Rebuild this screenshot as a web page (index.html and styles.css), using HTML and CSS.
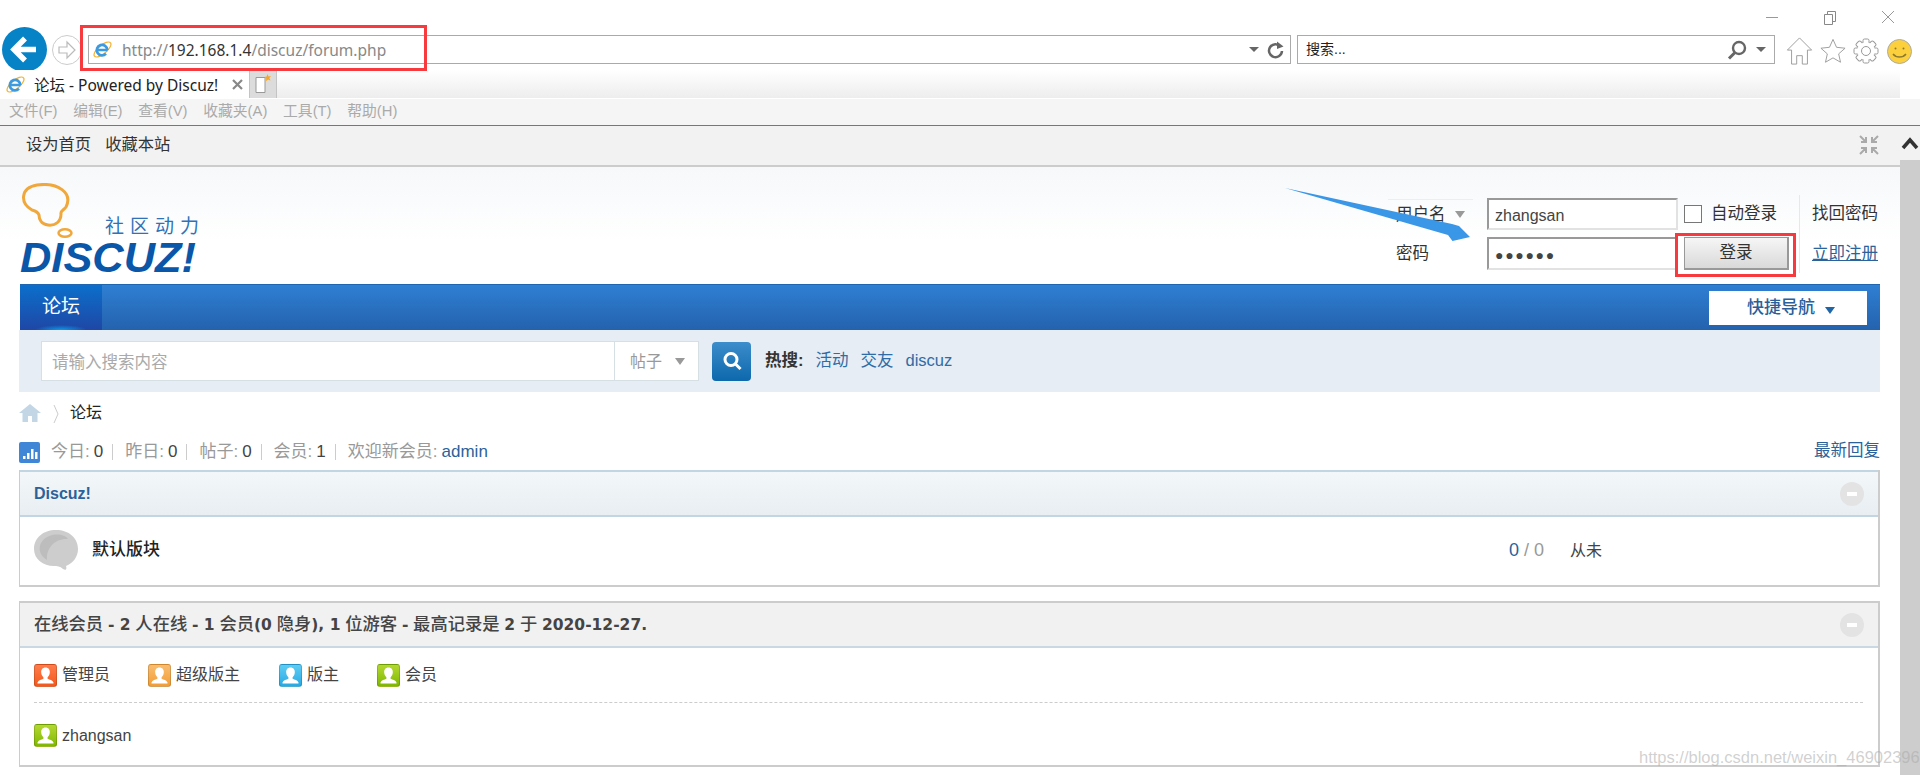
FILE: index.html
```html
<!DOCTYPE html>
<html lang="zh-CN">
<head>
<meta charset="utf-8">
<title>论坛 - Powered by Discuz!</title>
<link rel="stylesheet" href="styles.css">
</head>
<body>
<svg class="defs" width="0" height="0" aria-hidden="true">
  <symbol id="ie" viewBox="0 0 20 20">
    <ellipse cx="10" cy="10" rx="11" ry="4.500" transform="rotate(-40 10 10)" fill="none" stroke="#f2b233" stroke-width="1.300"/>
    <path d="M5.500 10.500h9.800M15 10.500a5.500 5.500 0 1 0-1.400 3.800" fill="none" stroke="#3b9ae0" stroke-width="2.800"/>
  </symbol>
  <symbol id="person" viewBox="0 0 23 23">
    <path d="M11.500 3.500c-3 0-4.500 2.200-4.300 5 .1 2 1 3.700 2.200 4.700v1.500c-2 1-5 1.300-5.900 3.800v1h16v-1c-.9-2.500-3.900-2.800-5.900-3.800v-1.500c1.200-1 2.100-2.700 2.200-4.700.2-2.800-1.300-5-4.300-5z" fill="#fff"/>
  </symbol>
  <symbol id="minus" viewBox="0 0 24 24">
    <circle cx="12" cy="12" r="12" fill="#e3e3e3"/><rect x="7" y="10" width="10" height="4" fill="#fff"/>
  </symbol>
</svg>

<div class="topstrip">
  <span class="win-btn"><svg width="14" height="14" viewBox="0 0 14 14"><path d="M1 7.500h12" stroke="#999" fill="none"/></svg></span>
  <span class="win-btn"><svg width="14" height="16" viewBox="0 0 14 16"><path d="M1.500 4.500h8v10h-8zM4.500 4.500v-3h8v10h-3" stroke="#888" fill="none"/></svg></span>
  <span class="win-btn"><svg width="14" height="14" viewBox="0 0 14 14"><path d="M1 1l12 12M13 1L1 13" stroke="#999" fill="none"/></svg></span>
</div>

<div class="navrow">
  <span class="back"><svg width="45" height="45" viewBox="0 0 45 45"><circle cx="22.500" cy="22.500" r="22.500" fill="#0683c6"/><path d="M34 22.500H13M23 11.500l-11 11 11 11" fill="none" stroke="#fff" stroke-width="5.500"/></svg></span>
  <span class="forward"><svg width="30" height="30" viewBox="0 0 30 30"><circle cx="15" cy="15" r="14.500" fill="#fff" stroke="#ccc"/><path d="M7 12h8V7l8 8-8 8v-5H7z" fill="none" stroke="#bbb" stroke-width="1.200"/></svg></span>
  <div class="addr">
    <svg class="ie-small" width="19" height="19"><use href="#ie"/></svg>
    <span class="url">http://<b>192.168.1.4</b>/discuz/forum.php</span>
    <span class="caret-sm"></span>
    <svg class="reload" width="18" height="20" viewBox="0 0 18 20"><path d="M13.500 6.500A6.500 6.500 0 1 0 15 11" fill="none" stroke="#666" stroke-width="2.500"/><path d="M10 1.500l6.500 5-6.500 2.500z" fill="#666"/></svg>
  </div>
  <div class="searchbox">
    <span class="search-label">搜索...</span>
    <svg width="20" height="20" viewBox="0 0 20 20"><circle cx="12" cy="8" r="6" fill="none" stroke="#666" stroke-width="2.400"/><path d="M8 12.500L2 18.500" stroke="#666" stroke-width="3"/></svg>
    <span class="caret-sm"></span>
  </div>
  <div class="tools">
    <svg width="27" height="28" viewBox="0 0 28 30"><path d="M14 1L1 14h4.500v15H11v-9h6v9h5.500V14H27z" fill="#fff" stroke="#999"/></svg>
    <svg width="26" height="26" viewBox="0 0 28 28"><path d="M14 1.500l3.800 8.500 9.200 1-6.900 6.100 2 9-8.100-4.700-8.100 4.700 2-9L1 11l9.200-1z" fill="#fff" stroke="#999"/></svg>
    <svg class="gear" width="26" height="26" viewBox="0 0 26 26"><g fill="#fff" stroke="#999"><rect x="10" y="1" width="6" height="24" rx="1.500"/><rect x="10" y="1" width="6" height="24" rx="1.500" transform="rotate(45 13 13)"/><rect x="10" y="1" width="6" height="24" rx="1.500" transform="rotate(90 13 13)"/><rect x="10" y="1" width="6" height="24" rx="1.500" transform="rotate(135 13 13)"/></g><circle cx="13" cy="13" r="8.800" fill="#fff"/><circle cx="13" cy="13" r="4.500" fill="#fff" stroke="#999"/></svg>
    <svg width="25" height="25" viewBox="0 0 25 25"><ellipse cx="12.500" cy="12.500" rx="12" ry="12" fill="#fcd03c" stroke="#aaa"/><circle cx="8.500" cy="9.500" r="1" fill="#8a7a30"/><circle cx="16.500" cy="9.500" r="1" fill="#8a7a30"/><path d="M6 15c3 4 10 4 13 0" fill="none" stroke="#8a7a30" stroke-width="1.500"/></svg>
  </div>
</div>

<div class="tabrow">
  <div class="tab">
    <svg width="19" height="19"><use href="#ie"/></svg>
    <span class="tab-title">论坛 - Powered by Discuz!</span>
    <svg class="tab-close" width="11" height="11" viewBox="0 0 11 11"><path d="M1 1l9 9M10 1l-9 9" stroke="#888" stroke-width="2.200"/></svg>
  </div>
  <div class="newtab"><svg width="18" height="20" viewBox="0 0 18 20"><path d="M2 3.500h9v15H2z" fill="#fff" stroke="#999"/><path d="M13.500 0l1 2.500 2.500-.4-1.700 2 1.200 2.400-2.500-1-2 1.700.3-2.700-2-1.600 2.400-.5z" fill="#f5a623"/></svg></div>
</div>

<div class="menubar">
  <span>文件(F)</span><span>编辑(E)</span><span>查看(V)</span><span>收藏夹(A)</span><span>工具(T)</span><span>帮助(H)</span>
</div>

<div class="viewport">
  <main class="page">
    <div class="topbar">
      <a class="tb-link">设为首页</a><a class="tb-link">收藏本站</a>
      <svg class="shrink" width="20" height="20" viewBox="0 0 20 20"><path d="M1 1l6 6M7 2v5H2M19 1l-6 6M13 2v5h5M1 19l6-6M7 18v-5H2M19 19l-6-6M13 18v-5h5" fill="none" stroke="#aaa" stroke-width="2"/></svg>
    </div>

    <div class="content">
      <header class="hdr">
        <svg class="logo" width="182" height="100" viewBox="0 0 182 100">
          <path d="M12 27C0 20 0 5 17 2c21-3 36 8 29 22-2 3-6 4-5 7 0 7-5 12-13 11-7-1-9-6-9-10-1-3-3-4-7-5z" fill="none" stroke="#f0a83c" stroke-width="3"/>
          <ellipse cx="45" cy="50" rx="6.500" ry="3.700" fill="none" stroke="#f0a83c" stroke-width="2.500"/>
          <text class="logo-cn" x="85" y="50" textLength="94">社区动力</text>
          <text class="logo-en" x="0" y="89" textLength="176" lengthAdjust="spacingAndGlyphs">DISCUZ!</text>
        </svg>
        <form class="login">
          <span class="lg-label lg-user">用户名<i class="tri tri-grey"></i></span>
          <span class="inp">zhangsan</span>
          <label class="auto"><i class="chk"></i>自动登录</label>
          <a class="lg-link">找回密码</a>
          <span class="lg-label">密码</span>
          <span class="inp inp-pw">●●●●●●</span>
          <span class="btn">登录</span>
          <a class="lg-link lg-reg">立即注册</a>
        </form>
      </header>

      <nav class="nav">
        <a class="nav-cur">论坛</a>
        <a class="quick">快捷导航<i class="tri tri-blue"></i></a>
      </nav>

      <div class="sband">
        <div class="sinput">请输入搜索内容</div>
        <div class="ssel">帖子<i class="tri tri-grey"></i></div>
        <span class="sbtn"><svg width="24" height="24" viewBox="0 0 24 24"><circle cx="11" cy="10.500" r="6" fill="none" stroke="#fff" stroke-width="3"/><path d="M15.500 15l5 5" stroke="#fff" stroke-width="3"/></svg></span>
        <strong class="hot">热搜:</strong>
        <a class="hotlink">活动</a><a class="hotlink">交友</a><a class="hotlink">discuz</a>
      </div>

      <div class="crumb">
        <svg width="22" height="18" viewBox="0 0 22 18"><path d="M11 0L0 9h3.500v9h5.500v-6h4v6h5.500V9H22z" fill="#c2d6e6"/></svg>
        <svg class="chev" width="6" height="20" viewBox="0 0 6 20"><path d="M1 1l4 9-4 9" fill="none" stroke="#ccc"/></svg>
        <span>论坛</span>
      </div>

      <div class="stats">
        <span class="chart"><svg width="21" height="21" viewBox="0 0 21 21"><path d="M4 14h2.500v3H4zM8 11h2.500v6H8zM12 7h2.500v10H12zM16 10h2.500v7H16z" fill="#fff"/></svg></span>
        <span class="st">今日:<em>0</em></span><i class="sep"></i>
        <span class="st">昨日:<em>0</em></span><i class="sep"></i>
        <span class="st">帖子:<em>0</em></span><i class="sep"></i>
        <span class="st">会员:<em>1</em></span><i class="sep"></i>
        <span class="st">欢迎新会员:<a class="admin">admin</a></span>
        <a class="latest">最新回复</a>
      </div>

      <section class="box">
        <div class="box-h box-h-blue">
          <a class="box-title">Discuz!</a>
          <svg width="24" height="24"><use href="#minus"/></svg>
        </div>
        <div class="forum">
          <svg class="bubble" width="44" height="40" viewBox="0 0 44 40"><path d="M22 0C9 0 0 8 0 19c0 10 9 17 20 17 3 0 6 0 9 3 3 2 4 0 3-3 7-3 12-9 12-17C44 8 35 0 22 0z" fill="#cdcdcd"/><path d="M13 30C12 17 22 8 34 9 30 3 14 2 7 13c-3 6-1 13 6 17z" fill="#bdbdbd"/></svg>
          <a class="forum-name">默认版块</a>
          <span class="counts"><b>0</b> / 0</span>
          <span class="never">从未</span>
        </div>
      </section>

      <section class="box box-2">
        <div class="box-h box-h-grey">
          <h2 class="online">在线会员 <b>- 2</b> 人在线 <b>- 1</b> 会员<b>(0</b> 隐身<b>), 1</b> 位游客 <b>-</b> 最高记录是 <b>2</b> 于 <b>2020-12-27.</b></h2>
          <svg width="24" height="24"><use href="#minus"/></svg>
        </div>
        <div class="legend">
          <span class="leg"><span class="badge b-admin"><svg width="23" height="23"><use href="#person"/></svg></span>管理员</span>
          <span class="leg"><span class="badge b-super"><svg width="23" height="23"><use href="#person"/></svg></span>超级版主</span>
          <span class="leg"><span class="badge b-mod"><svg width="23" height="23"><use href="#person"/></svg></span>版主</span>
          <span class="leg"><span class="badge b-member"><svg width="23" height="23"><use href="#person"/></svg></span>会员</span>
        </div>
        <div class="users">
          <span class="leg"><span class="badge b-member"><svg width="23" height="23"><use href="#person"/></svg></span>zhangsan</span>
        </div>
      </section>
    </div>
  </main>
  <aside class="scroll">
    <div class="scroll-top"><svg width="18" height="14" viewBox="0 0 18 14"><path d="M2 11l7-8 7 8" fill="none" stroke="#333" stroke-width="3.500"/></svg></div>
    <div class="scroll-thumb"></div>
  </aside>
</div>

<span class="redbox redbox-url"></span>
<span class="redbox redbox-btn"></span>
<svg class="arrow" width="190" height="56" viewBox="0 0 190 56"><path d="M0 0L167 36 174 38 185 49 167.500 53 163 47z" fill="#3a96e6"/></svg>
<span class="watermark">https://blog.csdn.net/weixin_46902396</span>
</body>
</html>
```
FILE: styles.css
```css
* { box-sizing: border-box; }
html, body { margin: 0; height: 775px; overflow: hidden; }
body {
  position: relative;
  background: #fff;
  color: #333;
  font: 16px/1.2 "Liberation Sans", "Noto Sans CJK SC", sans-serif;
}
a { color: inherit; text-decoration: none; }
i, em { font-style: normal; }
.defs { position: absolute; }
svg { display: block; flex: none; }

/* browser chrome */
.topstrip { height: 35px; display: flex; justify-content: flex-end; padding: 10px 25px 0 0; gap: 44px; }
.win-btn { width: 14px; height: 16px; }
.navrow { height: 29px; display: flex; align-items: center; padding-left: 2px; }
.back { width: 45px; height: 45px; flex: none; }
.forward { width: 30px; height: 30px; margin-left: 5px; flex: none; }
.addr {
  width: 1203px; height: 29px; margin-left: 6px; flex: none;
  display: flex; align-items: center;
  border: 1px solid #aaa; background: #fff;
  padding: 0 5px 0 4px;
}
.url { font: 15.500px "Noto Sans", sans-serif; color: #888; margin-left: 10px; padding-top: 1px; flex: 1; }
.url b { font-weight: 400; color: #333; }
.caret-sm { width: 0; height: 0; border: 5px solid transparent; border-top: 5px solid #666; border-bottom: 0; }
.reload { margin-left: 8px; }
.searchbox {
  width: 478px; height: 29px; margin-left: 6px; flex: none;
  display: flex; align-items: center; gap: 9px;
  border: 1px solid #aaa; padding: 0 8px;
}
.search-label { flex: 1; font-size: 14px; color: #222; }
.tools { display: flex; align-items: center; gap: 7px; margin-left: 11px; margin-top: 3px; }
.gear { margin-right: 1px; }

.tabrow {
  height: 28px; margin-top: 6px;
  display: flex; align-items: stretch;
  background: linear-gradient(#fff, #ededed);
  width: 1900px;
}
.tab { width: 249px; display: flex; align-items: center; background: #fff; padding-left: 6px; }
.tab-title { font: 15.500px "Noto Sans", "Noto Sans CJK SC", sans-serif; color: #222; margin-left: 9px; flex: 1; white-space: nowrap; }
.tab-close { margin-right: 6px; }
.newtab { width: 28px; background: #dcdcdc; border: 1px solid #c4c4c4; border-width: 0 1px; display: flex; align-items: center; justify-content: center; }

.menubar {
  height: 27px; margin-top: 1px; background: #f5f5f5;
  border-bottom: 1px solid #777;
  display: flex; align-items: center; padding-left: 9px;
  font-size: 14.800px; color: #aaa;
  gap: 15.700px;
}
.menubar span { white-space: nowrap; }

.viewport { display: flex; height: 649px; }
.page { width: 1900px; flex: none; }
.scroll { width: 20px; flex: none; display: flex; flex-direction: column; background: #f2f2f2; }
.scroll-top { height: 34px; padding: 11px 0 0 1px; }
.scroll-thumb { flex: 1; background: #cdcdcd; }

.topbar {
  height: 41px; background: #f2f2f2; border-bottom: 2px solid #ccc;
  display: flex; align-items: center; padding: 0 21px 2px 26px; gap: 14px;
  color: #333; font-size: 16.300px;
}
.shrink { margin-left: auto; }
.content { padding: 0 20px 0 19px; background: linear-gradient(#f6f8fa, #fff 75px) no-repeat; }

/* header */
.hdr { height: 117px; display: flex; justify-content: space-between; align-items: flex-start; }
.logo { margin: 16px 0 0 1px; }
.logo-cn { font: 19px "Noto Sans CJK SC", sans-serif; fill: #2f72b8; }
.logo-en { font: italic bold 42px "Liberation Sans", sans-serif; fill: #0a56a8; }
.login {
  margin-top: 31px;
  display: grid;
  grid-template-columns: 99px 197px 115px 81px;
  grid-template-rows: 32px 33px;
  row-gap: 7px;
  align-items: center;
  font-size: 16.500px;
}
.lg-label { padding-left: 8px; }
.lg-user { border-top: 1px solid #eee; display: flex; align-items: center; gap: 9px; height: 30px; width: 85px; }
.inp {
  height: 100%; display: flex; align-items: center;
  margin-right: 6px;
  padding: 3px 0 0 6px; color: #444;
  font-size: 16px;
  background: #fff;
  border: 2px solid; border-color: #999 #e2e2e2 #e2e2e2 #999;
}
.inp-pw { font-size: 14px; letter-spacing: 1.700px; }
.auto { display: flex; align-items: center; gap: 9px; white-space: nowrap; }
.chk { width: 18px; height: 18px; border: 1px solid #777; background: #fff; flex: none; }
.btn {
  margin-right: 10px; height: 33px;
  display: flex; align-items: center; justify-content: center;
  background: linear-gradient(#f6f6f6, #d9d9d9);
  border: 1px solid #999; border-width: 1px 2px 2px 1px; color: #333;
}
.lg-link { white-space: nowrap; border-left: 1px solid #e8e8e8; height: 39px; display: flex; align-items: center; padding-left: 12px; }
.lg-reg { color: #2b6299; text-decoration: underline; }

.tri { display: inline-block; width: 0; height: 0; border: 5.500px solid transparent; border-bottom: 0; border-top: 7px solid #999; }
.tri-blue { border-top-color: #1f66a8; margin: 4px 0 0 10px; }

/* nav */
.nav {
  height: 46px; margin-left: 1px; padding-right: 13px;
  display: flex; justify-content: space-between; align-items: center;
  background: linear-gradient(#2f7fd3, #2462ad);
  border-top: 1px solid #1e66b0;
}
.nav-cur {
  width: 82px; height: 100%;
  display: flex; align-items: center; justify-content: center;
  color: #fff; font-size: 19px;
  background: radial-gradient(ellipse 26px 5px at 50% 100%, #0a9be8, transparent), linear-gradient(#0b6fcb, #1f47a6);
}
.quick {
  width: 158px; height: 34px; background: #fff; color: #2b5f9a;
  font-size: 17px; font-weight: 500; display: flex; align-items: center; justify-content: flex-end; padding-right: 32px;
  white-space: nowrap; margin-top: 1px;
}

/* search */
.sband {
  height: 62px; background: #e6edf4;
  display: flex; align-items: center; padding: 0 0 0 22px;
}
.sinput {
  width: 574px; height: 40px; background: #fff; border: 1px solid #d5dfe4;
  display: flex; align-items: center; padding: 3px 0 0 10px; color: #aaa; font-size: 16.500px;
}
.ssel {
  width: 84px; height: 40px; background: #fff; border: 1px solid #d5dfe4; border-left: 0;
  display: flex; align-items: center; padding: 1px 0 0 15px; gap: 13px; color: #999;
}
.sbtn {
  width: 39px; height: 39px; margin-left: 13px; border-radius: 4px;
  background: linear-gradient(#3c8dcb, #0d68ac);
  display: flex; align-items: center; justify-content: center;
}
.hot { margin-left: 14px; font-size: 16.500px; color: #333; white-space: nowrap; }
.hotlink { margin-left: 12px; color: #2f6ca5; white-space: nowrap; font-size: 16.500px; }

/* crumb + stats */
.crumb { height: 40px; display: flex; align-items: center; gap: 13px; padding-top: 1px; color: #222; }
.chev { margin-left: -1px; margin-right: -2px; margin-top: 3px; }
.stats { height: 38px; display: flex; align-items: center; color: #999; padding-top: 2px; font-size: 17px; }
.chart { width: 21px; height: 21px; background: #3f87d6; border-radius: 2px; margin-right: 11px; }
.st em { color: #444; margin-left: 4px; }
.sep { width: 1px; height: 16px; background: #ccc; margin: 0 12px 0 9px; }
.admin { color: #2b6299; margin-left: 4px; font-size: 17px; }
.latest { margin-left: auto; color: #2b6299; font-size: 16.500px; margin-top: -2px; }

/* boxes */
.box { border: 1px solid #ccc; border-width: 0 2px 2px 1px; }
.box-2 { margin-top: 14px; border-top: 2px solid #ccc; }
.box-h { display: flex; align-items: center; justify-content: space-between; padding: 0 14px; }
.box-h-blue { height: 47px; background: linear-gradient(#f3f7f9, #e8eef2); border-top: 2px solid #c2d5e3; border-bottom: 2px solid #c2d5e3; }
.box-h-grey { height: 45px; background: #f1f1f1; border-bottom: 2px solid #c9d8e3; }
.box-title { font-weight: 700; color: #2b6299; }
.forum { height: 68px; display: flex; align-items: center; padding: 0 0 0 14px; }
.bubble { margin-top: -3px; }
.forum-name { margin-left: 14px; font-size: 17px; font-weight: 500; color: #222; width: 1417px; margin-top: -2px; }
.counts { width: 61px; font-size: 18px; color: #999; white-space: nowrap; }
.counts b { font-weight: 400; color: #2b6299; }
.never { color: #444; }

.online { margin: 0; font-size: 17.300px; font-weight: 500; color: #444; white-space: nowrap; }
.online b { font: 700 15.500px "DejaVu Sans", sans-serif; }
.legend { margin: 0 15px 0 14px; height: 55px; display: flex; align-items: center; border-bottom: 1px dashed #ccc; }
.leg { display: inline-flex; align-items: center; gap: 5px; color: #444; white-space: nowrap; margin-right: 38px; }
.leg:nth-child(2) { margin-right: 39px; }
.badge { width: 23px; height: 23px; border-radius: 3px; border: 1px solid rgba(0,0,0,.15); overflow: hidden; flex: none; }
.badge svg { margin: -1px; }
.b-admin { background: linear-gradient(#ff7d4c, #f4581c); }
.b-super { background: linear-gradient(#f8bd72, #f49d32); }
.b-mod { background: linear-gradient(#5ecdf3, #28a9e4); }
.b-member { background: linear-gradient(#b4d832, #7fb800); }
.users { padding: 21px 15px 0 14px; height: 62px; }

/* annotations */
.redbox { position: absolute; border: 3px solid #f73a3d; }
.redbox-url { left: 80px; top: 25px; width: 347px; height: 46px; }
.redbox-btn { left: 1675px; top: 233px; width: 121px; height: 44px; }
.arrow { position: absolute; left: 1285px; top: 188px; }
.watermark { position: absolute; left: 1639px; top: 748px; font-size: 16.500px; color: rgba(170,170,170,.55); white-space: nowrap; }
```
